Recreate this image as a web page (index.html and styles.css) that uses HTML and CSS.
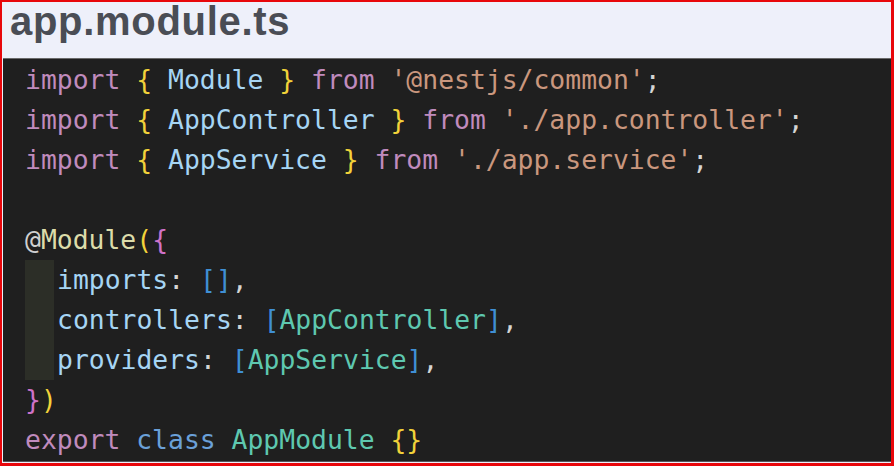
FILE: index.html
```html
<!DOCTYPE html>
<html>
<head>
<meta charset="utf-8">
<link rel="stylesheet" href="styles.css">
</head>
<body>
<div class="frame">
  <div class="header"><h1 class="title">app.module.ts</h1></div>
  <div class="panel">
<pre class="code"><div class="ln"><span class="kw">import</span> <span class="br">{</span> <span class="id">Module</span> <span class="br">}</span> <span class="kw">from</span> <span class="str">'@nestjs/common'</span><span class="pl">;</span></div><div class="ln"><span class="kw">import</span> <span class="br">{</span> <span class="id">AppController</span> <span class="br">}</span> <span class="kw">from</span> <span class="str">'./app.controller'</span><span class="pl">;</span></div><div class="ln"><span class="kw">import</span> <span class="br">{</span> <span class="id">AppService</span> <span class="br">}</span> <span class="kw">from</span> <span class="str">'./app.service'</span><span class="pl">;</span></div><div class="ln"> </div><div class="ln"><span class="at">@</span><span class="fn">Module</span><span class="br">(</span><span class="br2">{</span></div><div class="ln"><span class="guide"></span><span class="id">imports</span><span class="pl">: </span><span class="br3">[]</span><span class="pl">,</span></div><div class="ln"><span class="guide"></span><span class="id">controllers</span><span class="pl">: </span><span class="br3">[</span><span class="ty">AppController</span><span class="br3">]</span><span class="pl">,</span></div><div class="ln"><span class="guide"></span><span class="id">providers</span><span class="pl">: </span><span class="br3">[</span><span class="ty">AppService</span><span class="br3">]</span><span class="pl">,</span></div><div class="ln"><span class="br2">}</span><span class="br">)</span></div><div class="ln"><span class="kw">export</span> <span class="st">class</span> <span class="ty">AppModule</span> <span class="br">{}</span></div></pre>
  </div>
</div>
</body>
</html>
```
FILE: styles.css
```css
html, body {
  margin: 0;
  padding: 0;
  background: #eef0fa;
}
.frame {
  box-sizing: border-box;
  width: 894px;
  height: 466px;
  border-style: solid;
  border-color: #e8070b;
  border-width: 2px 3px 3px 2px;
  background: #eef0fa;
  display: flex;
  flex-direction: column;
}
.header {
  height: 56px;
  padding: 1px 0 0 8px;
  box-sizing: border-box;
}
.title {
  margin: 0;
  font-family: "Liberation Sans", Arial, sans-serif;
  font-weight: bold;
  font-size: 40px;
  line-height: 36px;
  color: #4a4d55;
  letter-spacing: 0.7px;
}
.panel {
  margin-left: 1px;
  background: #1f1f1f;
  border-top: 1px solid #6a6a6a;
  border-bottom: 1px solid #55575c;
  padding: 1px 0 1px 22px;
}
.code {
  margin: 0;
  font-family: "DejaVu Sans Mono", Menlo, monospace;
  font-size: 26.4px;
  line-height: 40px;
  color: #d4d4d4;
}
.ln {
  height: 40px;
  white-space: pre;
}
.guide {
  display: inline-block;
  width: 29px;
  margin-right: 3px;
  height: 40px;
  vertical-align: top;
  background: #2c2e27;
}
.kw { color: #c08bbd; }
.br { color: #f2d23a; }
.br2 { color: #cf72c9; }
.br3 { color: #3f8fd4; }
.id { color: #a6d5f4; }
.str { color: #ca977e; }
.pl { color: #d4d4d4; }
.at { color: #d0d0d0; }
.fn { color: #dcdcaa; }
.st { color: #6aa0d8; }
.ty { color: #5ec8b0; }
```
